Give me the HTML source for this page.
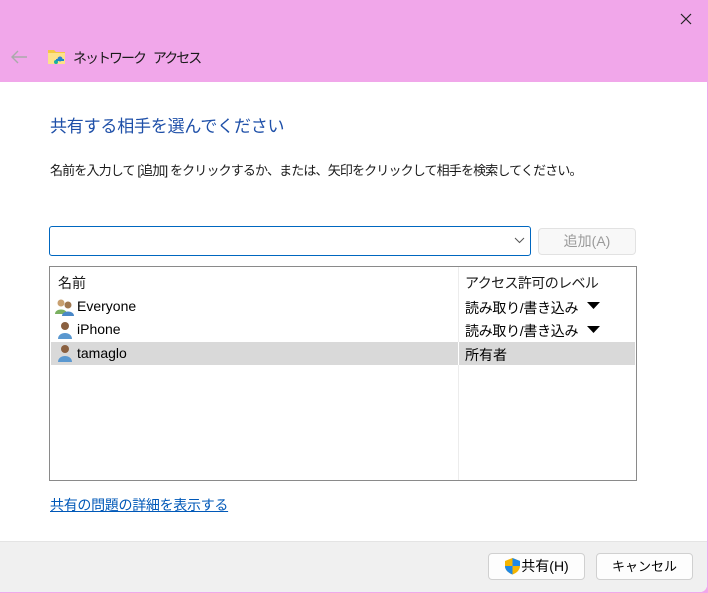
<!DOCTYPE html>
<html><head><meta charset="utf-8"><style>
*{margin:0;padding:0;box-sizing:border-box}
body{width:708px;height:593px;overflow:hidden;background:#f1a7ea;font-family:"Liberation Sans","Noto Sans CJK JP",sans-serif;color:#000;position:relative;font-size:13px}
.win{position:absolute;left:0;top:0;width:707px;height:592px;background:#fff;border-radius:0 0 7px 0;overflow:hidden}
.title{position:absolute;left:0;top:0;width:707px;height:82px;background:#f1a7ea}
.abs{position:absolute;white-space:nowrap}
.footer{position:absolute;left:0;top:541px;width:707px;height:51px;background:#f0f0f0;border-top:1px solid #e4e4e4}
.btn{position:absolute;height:27px;background:#fdfdfd;border:1px solid #d0d0d0;border-radius:4px;font-size:13px;text-align:center;line-height:25px}
.row{position:absolute;left:51px;width:584px;height:23px;line-height:23px}
</style></head><body>
<div class="win">
<div class="title">
 <svg class="abs" style="left:680px;top:13px" width="12" height="12"><path d="M1 1l10 10M11 1L1 11" stroke="#222" stroke-width="1.2"/></svg>
 <svg class="abs" style="left:9px;top:49px" width="20" height="16"><path d="M18 8H3M9 2L3 8l6 6" stroke="#aaa" stroke-width="1.4" fill="none"/></svg>
 <svg class="abs" style="left:47px;top:48px" width="20" height="18"><path d="M1 2h6l2 2h9v12H1z" fill="#f5c842"/><rect x="1" y="5" width="17" height="11" fill="#fde28a"/><circle cx="13" cy="11" r="2.5" fill="#2a7fd4"/><circle cx="9" cy="14" r="2" fill="#1ab0a0"/><rect x="9" y="11" width="8" height="2" fill="#1a88c8"/></svg>
 <div class="abs" style="left:73px;top:48px;font-size:14px;letter-spacing:-2px;word-spacing:6px;color:#1a1a1a">ネットワーク アクセス</div>
</div>
<div class="abs" style="left:50px;top:112px;font-size:17px;letter-spacing:-0.2px;color:#1e4fa8">共有する相手を選んでください</div>
<div class="abs" style="left:50px;top:160px;font-size:13px;letter-spacing:-0.85px;color:#1a1a1a">名前を入力して [追加] をクリックするか、または、矢印をクリックして相手を検索してください。</div>
<div class="abs" style="left:49px;top:226px;width:482px;height:30px;border:1px solid #0067c0;border-radius:3px"></div>
<svg class="abs" style="left:514px;top:236px" width="11" height="8"><path d="M1 2l4.5 4.5L10 2" stroke="#555" fill="none"/></svg>
<div class="btn" style="left:538px;top:228px;width:98px;color:#9a9a9a;background:#f8f8f8;border-color:#e2e2e2;font-size:14px">追加(A)</div>
<div class="abs" style="left:49px;top:266px;width:588px;height:215px;border:1px solid #8a8a8a"></div>
<div class="abs" style="left:458px;top:267px;width:1px;height:213px;background:#ececec"></div>
<div class="abs" style="left:58px;top:273px;color:#1a1a1a;font-size:14px">名前</div>
<div class="abs" style="left:465px;top:273px;color:#1a1a1a;letter-spacing:-0.6px;font-size:14px">アクセス許可のレベル</div>
<div class="row" style="top:342px;background:#d9d9d9"></div>
<div class="abs" style="left:458px;top:342px;width:1px;height:23px;background:#fff"></div>
<svg class="abs" style="left:55px;top:298px" width="20" height="18"><circle cx="6" cy="5" r="3.5" fill="#c8a070"/><path d="M0 16c0-6 12-6 12 0z" fill="#7ab060"/><circle cx="13" cy="7" r="3.5" fill="#a07850"/><path d="M7 18c0-6 12-6 12 0z" fill="#4a88c8"/></svg>
<svg class="abs" style="left:57px;top:321px" width="16" height="18"><circle cx="8" cy="5" r="4" fill="#8a6040"/><path d="M1 18c0-8 14-8 14 0z" fill="#5a98d0"/></svg>
<svg class="abs" style="left:57px;top:344px" width="16" height="18"><circle cx="8" cy="5" r="4" fill="#8a6040"/><path d="M1 18c0-8 14-8 14 0z" fill="#5a98d0"/></svg>
<div class="abs" style="left:77px;top:298px;font-size:14px">Everyone</div>
<div class="abs" style="left:77px;top:321px;font-size:14px">iPhone</div>
<div class="abs" style="left:77px;top:345px;font-size:14px">tamaglo</div>
<div class="abs" style="left:465px;top:298px;font-size:14px;letter-spacing:-0.3px">読み取り/書き込み</div>
<div class="abs" style="left:465px;top:321px;font-size:14px;letter-spacing:-0.3px">読み取り/書き込み</div>
<div class="abs" style="left:465px;top:345px;font-size:14px">所有者</div>
<svg class="abs" style="left:587px;top:302px" width="14" height="8"><path d="M0 0h13L6.5 7z"/></svg>
<svg class="abs" style="left:587px;top:326px" width="14" height="8"><path d="M0 0h13L6.5 7z"/></svg>
<div class="abs" style="left:50px;top:495px;color:#0058b8;text-decoration:underline;font-size:14px;letter-spacing:-0.3px">共有の問題の詳細を表示する</div>
<div class="footer">
 <div class="btn" style="left:488px;top:11px;width:97px;font-size:14px"><svg style="vertical-align:-4px" width="17" height="18"><path d="M8.5 1L16 4v5c0 4-3.5 7-7.5 8.5C4.5 16 1 13 1 9V4z" fill="#f4b400"/><path d="M8.5 1L16 4v5H8.5zM1 9h7.5v8.5C4.5 16 1 13 1 9z" fill="#1e88e5"/></svg>共有(H)</div>
 <div class="btn" style="left:596px;top:11px;width:97px">キャンセル</div>
</div>
</div>
</body></html>
